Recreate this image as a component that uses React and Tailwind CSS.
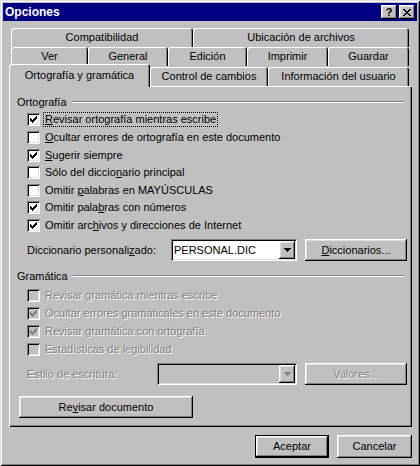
import React from 'react';

const raised = 'shadow-[inset_-1px_-1px_#000,inset_1px_1px_#fff,inset_-2px_-2px_#808080,inset_2px_2px_#dfdfdf]';
const sunken = 'shadow-[inset_1px_1px_#808080,inset_-1px_-1px_#fff,inset_2px_2px_#000,inset_-2px_-2px_#dfdfdf]';
const grayText = 'text-[#808080] [text-shadow:1px_1px_0_#fff]';

function Check({ color }) {
  return (
    <svg width="7" height="7" viewBox="0 0 7 7" shapeRendering="crispEdges" fill={color}>
      <rect x="6" y="0" width="1" height="1" />
      <rect x="5" y="1" width="2" height="1" />
      <rect x="0" y="2" width="1" height="1" />
      <rect x="4" y="2" width="3" height="1" />
      <rect x="0" y="3" width="2" height="1" />
      <rect x="3" y="3" width="3" height="1" />
      <rect x="0" y="4" width="5" height="1" />
      <rect x="1" y="5" width="3" height="1" />
      <rect x="2" y="6" width="1" height="1" />
    </svg>
  );
}

function Arrow({ color }) {
  return (
    <svg width="7" height="4" viewBox="0 0 7 4" shapeRendering="crispEdges" fill={color}>
      <rect x="0" y="0" width="7" height="1" />
      <rect x="1" y="1" width="5" height="1" />
      <rect x="2" y="2" width="3" height="1" />
      <rect x="3" y="3" width="1" height="1" />
    </svg>
  );
}

function Checkbox({ checked, disabled, focus, className = '', children }) {
  return (
    <div className={`flex h-[17px] items-center pl-[18px] ${className}`}>
      <div className={`flex h-[13px] w-[13px] shrink-0 items-center justify-center ${sunken} ${disabled ? 'bg-[#c0c0c0]' : 'bg-white'}`}>
        {checked && <Check color={disabled ? '#808080' : '#000'} />}
      </div>
      <span
        className={`ml-[3px] border px-[1px] leading-[13px] ${focus ? 'border-dotted border-black' : 'border-transparent'} ${disabled ? grayText : ''}`}
      >
        {children}
      </span>
    </div>
  );
}

function Section({ title, className = '' }) {
  return (
    <div className={`flex h-[14px] items-center px-[8px] ${className}`}>
      <span className="leading-[14px]">{title}</span>
      <div className="ml-[5px] h-[2px] flex-1 border-t border-b border-t-[#808080] border-b-white" />
    </div>
  );
}

function Button({ className = '', disabled, children }) {
  return (
    <div className={`flex items-center justify-center bg-[#c0c0c0] ${raised} ${disabled ? grayText : ''} ${className}`}>
      {children}
    </div>
  );
}

function Combo({ className = '', disabled, value }) {
  return (
    <div className={`flex h-[22px] items-center p-[2px] ${sunken} ${disabled ? 'bg-[#c0c0c0]' : 'bg-white'} ${className}`}>
      <span className="flex-1 pl-[1px] leading-[13px]">{value}</span>
      <div className={`flex h-[18px] w-[16px] items-center justify-center bg-[#c0c0c0] ${raised}`}>
        <Arrow color={disabled ? '#808080' : '#000'} />
      </div>
    </div>
  );
}

const tabEdge =
  'flex items-center justify-center rounded-t-[3px] shadow-[inset_1px_1px_#fff,inset_-1px_0_#000,inset_-2px_0_#808080]';

export default function App() {
  return (
    <div className="flex h-[466px] w-[420px] flex-col bg-[#c0c0c0] p-[3px] font-['Liberation_Sans',Arial,sans-serif] text-[11px] text-black shadow-[inset_1px_1px_#dfdfdf,inset_-1px_-1px_#000,inset_2px_2px_#fff,inset_-2px_-2px_#808080]">
      {/* title bar */}
      <div className="flex h-[18px] items-center bg-[#000080] pl-[2px] pr-[2px]">
        <span className="flex-1 text-[12px] font-bold leading-[18px] text-white">Opciones</span>
        <Button className="h-[14px] w-[16px] text-[11px] font-bold leading-none">?</Button>
        <Button className="ml-[2px] h-[14px] w-[16px]">
          <svg width="8" height="7" viewBox="0 0 8 7" shapeRendering="crispEdges" fill="#000">
            <rect x="0" y="0" width="2" height="1" /><rect x="6" y="0" width="2" height="1" />
            <rect x="1" y="1" width="2" height="1" /><rect x="5" y="1" width="2" height="1" />
            <rect x="2" y="2" width="4" height="1" />
            <rect x="3" y="3" width="2" height="1" />
            <rect x="2" y="4" width="4" height="1" />
            <rect x="1" y="5" width="2" height="1" /><rect x="5" y="5" width="2" height="1" />
            <rect x="0" y="6" width="2" height="1" /><rect x="6" y="6" width="2" height="1" />
          </svg>
        </Button>
      </div>

      {/* tabs */}
      <div className="ml-[6px] mt-[7px] w-[403px]">
        <div className="flex h-[19px] pl-[2px]">
          <div className={`${tabEdge} w-[182px]`}>Compatibilidad</div>
          <div className={`${tabEdge} w-[216px]`}>Ubicación de archivos</div>
        </div>
        <div className="flex h-[19px] pl-[2px]">
          <div className={`${tabEdge} w-[77px]`}>Ver</div>
          <div className={`${tabEdge} w-[80px]`}>General</div>
          <div className={`${tabEdge} w-[79px]`}>Edición</div>
          <div className={`${tabEdge} w-[81px]`}>Imprimir</div>
          <div className={`${tabEdge} w-[81px]`}>Guardar</div>
        </div>
        <div className="flex h-[20px] items-start">
          <div className={`${tabEdge} relative z-10 -mt-[2px] h-[23px] w-[141px] bg-[#c0c0c0] pb-[1px]`}>Ortografía y gramática</div>
          <div className={`${tabEdge} mt-[1px] h-[19px] w-[118px]`}>Control de cambios</div>
          <div className={`${tabEdge} mt-[1px] h-[19px] w-[141px]`}>Información del usuario</div>
        </div>

        {/* panel */}
        <div className="flex h-[341px] flex-col shadow-[inset_1px_1px_#fff,inset_-1px_-1px_#000,inset_-2px_-2px_#808080]">
          <Section title="Ortografía" className="mt-[9px]" />
          <Checkbox checked focus className="mt-[2px]"><u>R</u>evisar ortografía mientras escribe</Checkbox>
          <Checkbox className="mt-[1px]"><u>O</u>cultar errores de ortografía en este documento</Checkbox>
          <Checkbox checked className="mt-[1px]"><u>S</u>ugerir siempre</Checkbox>
          <Checkbox>Sólo del diccio<u>n</u>ario principal</Checkbox>
          <Checkbox className="mt-[1px]">Omitir <u>p</u>alabras en MAYÚSCULAS</Checkbox>
          <Checkbox checked>Omitir pala<u>b</u>ras con números</Checkbox>
          <Checkbox checked className="mt-[1px]">Omitir arc<u>h</u>ivos y direcciones de Internet</Checkbox>

          <div className="mt-[5px] flex h-[22px] items-center pl-[18px]">
            <span className="w-[144px]">Diccionario personali<u>z</u>ado:</span>
            <Combo className="w-[126px]" value="PERSONAL.DIC" />
            <Button className="ml-[8px] h-[22px] w-[102px]"><span><u>D</u>iccionarios...</span></Button>
          </div>

          <Section title="Gramática" className="mt-[8px]" />
          <Checkbox disabled className="mt-[4px]">Revisar gramática mientras escribe</Checkbox>
          <Checkbox disabled checked className="mt-[1px]">Ocultar errores gramaticales en este documento</Checkbox>
          <Checkbox disabled checked className="mt-[1px]">Revisar gramática con ortografía</Checkbox>
          <Checkbox disabled className="mt-[1px]">Estadísticas de legibilidad</Checkbox>

          <div className="mt-[5px] flex h-[22px] items-center pl-[18px]">
            <span className={`w-[130px] ${grayText}`}>Estilo de escritura:</span>
            <Combo disabled className="w-[140px]" value="" />
            <Button disabled className="ml-[8px] h-[22px] w-[102px]">Valores...</Button>
          </div>

          <Button className="ml-[10px] mt-[11px] h-[22px] w-[174px]"><span>Re<u>v</u>isar documento</span></Button>
        </div>
      </div>

      {/* bottom buttons */}
      <div className="mt-[8px] flex justify-end pr-[5px]">
        <div className="h-[23px] w-[74px] border border-black">
          <Button className="h-full w-full">Aceptar</Button>
        </div>
        <Button className="ml-[8px] h-[23px] w-[75px]">Cancelar</Button>
      </div>
    </div>
  );
}
